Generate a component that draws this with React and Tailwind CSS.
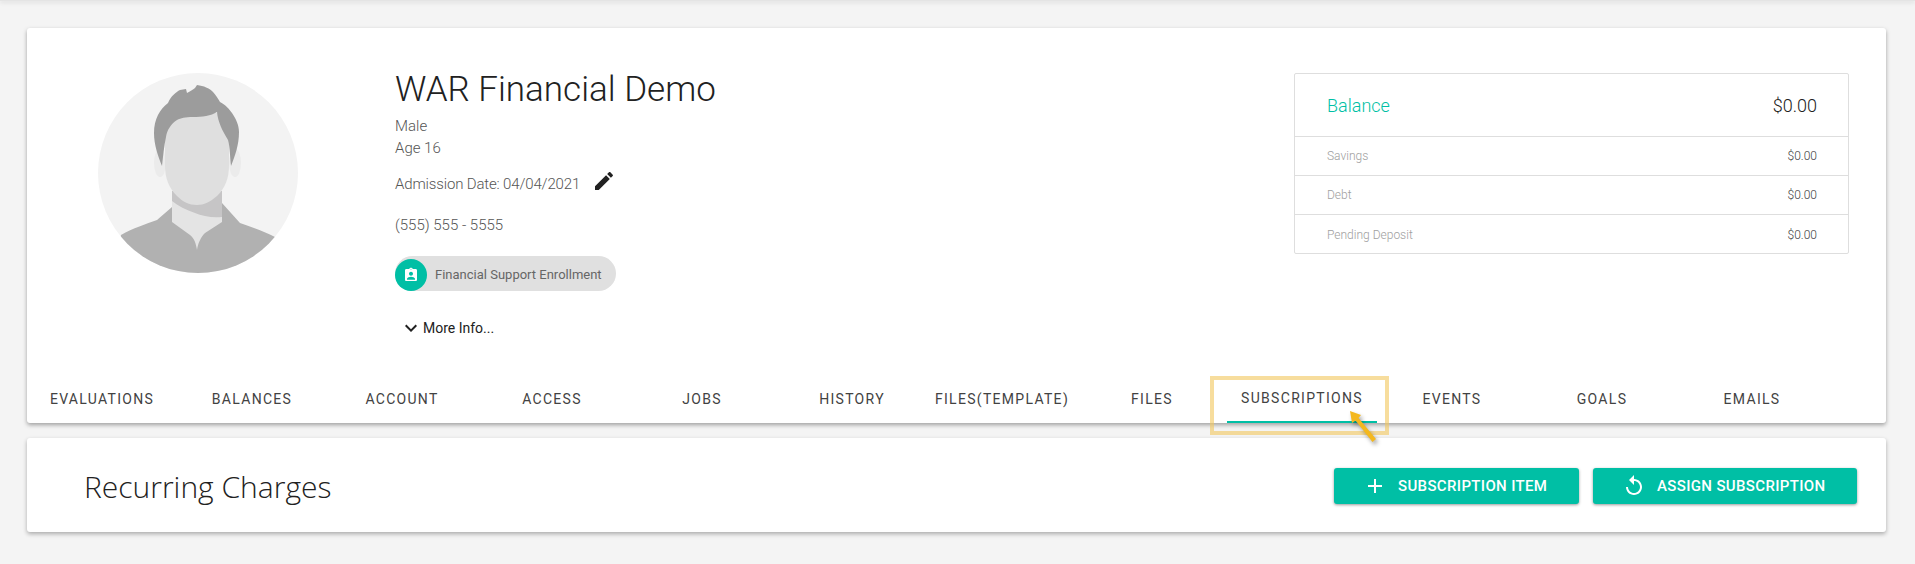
import React from 'react';

const tabs = ['Evaluations', 'Balances', 'Account', 'Access', 'Jobs', 'History', 'Files(Template)', 'Files', 'Subscriptions', 'Events', 'Goals', 'Emails'];

const balanceRows = ['Savings', 'Debt', 'Pending Deposit'];

function Avatar() {
  return (
    <svg width="200" height="200" viewBox="0 0 200 200" className="shrink-0">
      <defs>
        <clipPath id="avatarClip">
          <circle cx="100" cy="100" r="100" />
        </clipPath>
      </defs>
      <g clipPath="url(#avatarClip)">
        <rect width="200" height="200" fill="#f3f3f3" />
        {/* shoulders */}
        <path d="M23 162 C35 155 48 151 59 147 L74 134 L124 130 L142 150 C153 154 166 158 177 164 L185 200 L15 200 Z" fill="#b1b1b1" />
        {/* neck */}
        <path d="M74 118 L124 118 L124 149 L107 160 C103 164 100 170 99 177 C98 170 96 165 92 162 L74 149 Z" fill="#e4e4e4" />
        <path d="M74 118 L124 118 L124 144 C114 145 104 143 97 140 C88 137 80 133 74 128 Z" fill="#c6c5c6" />
        {/* ears */}
        <ellipse cx="62" cy="90" rx="6" ry="14" fill="#ebebeb" />
        <ellipse cx="137" cy="90" rx="6" ry="14" fill="#ebebeb" />
        {/* face */}
        <path d="M67 40 L131 40 L131 92 C131 106 127 115 119 123 C112 129 106 132 99 132 C91 132 85 129 79 123 C71 115 67 106 67 92 Z" fill="#dfdfdf" />
        {/* hair */}
        <path d="M64 93 C60 83 56 72 56 60 C56 46 62 36 70 30 C73 23 78 19 82 17 L88 16 L89 20 C92 18 95 17 97 15 L99 12 C106 13 111 15 115 19 C118 22 120 26 122 29 C128 32 131 36 134 40 C138 46 141 52 141 59 C141 72 137 83 133 93 C132 84 132 74 130 67 C124 57 120 49 119 39 C113 43 104 44 95 44 C87 44 83 45 79 47 C73 51 69 57 68 64 C66 73 65 84 64 93 Z" fill="#9c9c9c" />
      </g>
    </svg>
  );
}

function Pencil() {
  return (
    <svg width="24" height="24" viewBox="0 0 24 24" fill="#212121" className="ml-[12px] -mt-[6px]">
      <path d="M3 17.25V21h3.75L17.81 9.94l-3.75-3.75L3 17.25zM20.71 7.04c.39-.39.39-1.02 0-1.41l-2.34-2.34c-.39-.39-1.02-.39-1.41 0l-1.83 1.83 3.75 3.75 1.83-1.83z" />
    </svg>
  );
}

function BadgeIcon() {
  return (
    <svg width="16" height="16" viewBox="0 0 24 24" fill="#fff">
      <path d="M19 3h-4.18C14.4 1.84 13.3 1 12 1s-2.4.84-2.82 2H5c-1.1 0-2 .9-2 2v14c0 1.1.9 2 2 2h14c1.1 0 2-.9 2-2V5c0-1.1-.9-2-2-2zm-7-.25c.41 0 .75.34.75.75s-.34.75-.75.75-.75-.34-.75-.75.34-.75.75-.75zM12 7c1.66 0 3 1.34 3 3s-1.34 3-3 3-3-1.34-3-3 1.34-3 3-3zm6 12H6v-1.4c0-2 4-3.1 6-3.1s6 1.1 6 3.1V19z" />
    </svg>
  );
}

function Chevron() {
  return (
    <svg width="24" height="24" viewBox="0 0 24 24" fill="#212121" className="-mx-[6px]">
      <path d="M16.59 8.59L12 13.17 7.41 8.59 6 10l6 6 6-6z" />
    </svg>
  );
}

function PlusIcon() {
  return (
    <svg width="24" height="24" viewBox="0 0 24 24" fill="#fff">
      <path d="M19 13h-6v6h-2v-6H5v-2h6V5h2v6h6v2z" />
    </svg>
  );
}

function ReplayIcon() {
  return (
    <svg width="24" height="24" viewBox="0 0 24 24" fill="#fff">
      <path d="M12 5V1L7 6l5 5V7c3.31 0 6 2.69 6 6s-2.69 6-6 6-6-2.69-6-6H4c0 4.42 3.58 8 8 8s8-3.58 8-8-3.58-8-8-8z" />
    </svg>
  );
}

function Arrow() {
  return (
    <svg width="40" height="44" viewBox="0 0 40 44" className="absolute left-[118px] top-[33px] overflow-visible drop-shadow-[2px_3px_2px_rgba(0,0,0,0.35)]">
      <path d="M5 3 L16 7 L13.5 10 L31 31 L27.5 34 L10.5 12.5 L7 15 Z" fill="#f4b81e" />
    </svg>
  );
}

function App() {
  return (
    <div className="min-h-[564px] bg-[#f4f4f4] font-['Roboto',sans-serif]">
      <div className="h-px bg-[#e4e4e4] shadow-[0_1px_4px_rgba(0,0,0,0.25)]" />
      <div className="flex flex-col gap-[15px] pt-[27px] pl-[27px] pr-[29px]">
        <div className="bg-white rounded-[3px] shadow-[0_2px_4px_rgba(0,0,0,0.35)]">
          <div className="flex h-[347px] pt-[45px] pl-[71px] pr-[37px]">
            <Avatar />
            <div className="ml-[97px] flex-1 text-[15px] font-light text-[#555]">
              <h1 className="-mt-[3px] text-[35px] leading-[40px] font-light text-[#212121]">WAR Financial Demo</h1>
              <div className="mt-[5px] leading-[22px]">Male</div>
              <div className="leading-[22px]">Age 16</div>
              <div className="mt-[11px] flex items-center h-[28px] tracking-[-0.15px]">
                Admission Date: 04/04/2021
                <Pencil />
              </div>
              <div className="mt-[13px] leading-[28px]">(555) 555 - 5555</div>
              <div className="mt-[17px] w-[221px] h-[35px] rounded-full bg-[#e0e0e0] flex items-end">
                <div className="w-[32px] h-[32px] rounded-full bg-[#00bfa5] flex items-center justify-center">
                  <BadgeIcon />
                </div>
                <span className="ml-[8px] mb-[4px] text-[13px] leading-[24px] font-normal text-[#666]">Financial Support Enrollment</span>
              </div>
              <div className="mt-[25px] ml-[10px] flex items-center h-[24px] text-[14px] font-normal text-[#212121]">
                <Chevron />
                <span className="ml-[6px]">More Info...</span>
              </div>
            </div>
            <div className="w-[555px] h-[181px] border border-[#dedede] rounded-[2px] text-[12px]">
              <div className="h-[63px] flex items-center justify-between pl-[32px] pr-[31px] border-b border-[#dedede] text-[18px] font-light">
                <span className="text-[#00bfa5]">Balance</span>
                <span className="text-[#212121]">$0.00</span>
              </div>
              {balanceRows.map((row, index) => (
                <div key={row} className={`h-[39px] flex items-center justify-between pl-[32px] pr-[31px] font-light ${index < 2 ? 'border-b border-[#dedede]' : ''}`}>
                  <span className="text-[#9e9e9e]">{row}</span>
                  <span className="text-[#424242]">$0.00</span>
                </div>
              ))}
            </div>
          </div>
          <div className="flex">
            {tabs.map((tab) => (
              <div key={tab} className={`relative w-[150px] h-[48px] flex items-center justify-center uppercase text-[14px] tracking-[1.3px] text-[#424242] ${tab === 'Subscriptions' ? 'border-b-2 border-[#00bfa5]' : ''}`}>
                {tab}
                {tab === 'Subscriptions' && (
                  <>
                    <div className="absolute -left-[17px] -right-[12px] top-px h-[59px] border-[4px] border-[#f2c75c]/60" />
                    <Arrow />
                  </>
                )}
              </div>
            ))}
          </div>
        </div>
        <div className="h-[94px] bg-white rounded-[3px] shadow-[0_2px_4px_rgba(0,0,0,0.3)] flex items-center justify-between pl-[57px] pr-[29px] pt-[2px]">
          <h2 className="text-[30px] font-light text-[#212121] font-['Open_Sans',sans-serif]">Recurring Charges</h2>
          <div className="flex gap-[14px]">
            <button className="w-[245px] h-[36px] rounded-[3px] bg-[#00bfa5] text-white text-[15px] tracking-[0.35px] font-medium uppercase shadow-[0_1px_3px_rgba(0,0,0,0.4)] flex items-center pl-[29px]">
              <PlusIcon />
              <span className="ml-[11px]">Subscription Item</span>
            </button>
            <button className="w-[264px] h-[36px] rounded-[3px] bg-[#00bfa5] text-white text-[15px] tracking-[0.35px] font-medium uppercase shadow-[0_1px_3px_rgba(0,0,0,0.4)] flex items-center pl-[29px]">
              <ReplayIcon />
              <span className="ml-[11px]">Assign Subscription</span>
            </button>
          </div>
        </div>
      </div>
    </div>
  );
}

export default App;
